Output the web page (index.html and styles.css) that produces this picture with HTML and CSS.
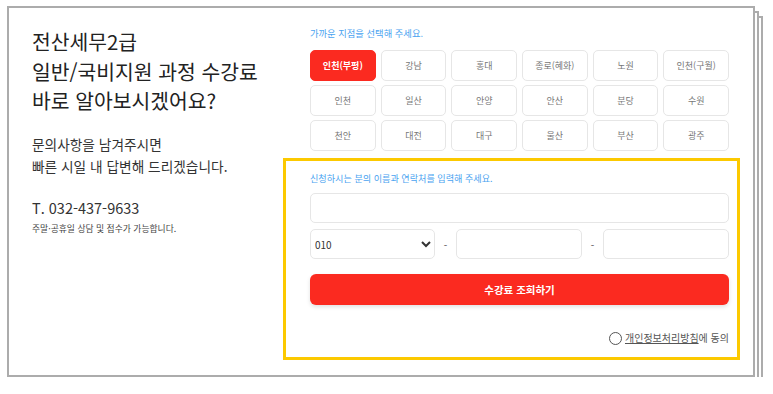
FILE: index.html
```html
<!DOCTYPE html>
<html lang="ko">
<head>
<meta charset="UTF-8">
<meta name="viewport" content="width=device-width, initial-scale=1.0">
<title>수강료 조회</title>
<link rel="stylesheet" href="styles.css">
</head>
<body>
<div class="card">
    <div class="info">
        <h1>전산세무2급<br>일반/국비지원 과정 수강료<br>바로 알아보시겠어요?</h1>
        <p class="desc">문의사항을 남겨주시면<br>빠른 시일 내 답변해 드리겠습니다.</p>
        <p class="tel">T. 032-437-9633</p>
        <p class="note">주말·공휴일 상담 및 접수가 가능합니다.</p>
    </div>
    <div class="apply">
        <div class="branch">
            <p class="guide">가까운 지점을 선택해 주세요.</p>
            <div class="branch-grid">
                <button class="branch-btn active">인천(부평)</button>
                <button class="branch-btn">강남</button>
                <button class="branch-btn">홍대</button>
                <button class="branch-btn">종로(혜화)</button>
                <button class="branch-btn">노원</button>
                <button class="branch-btn">인천(구월)</button>
                <button class="branch-btn">인천</button>
                <button class="branch-btn">일산</button>
                <button class="branch-btn">안양</button>
                <button class="branch-btn">안산</button>
                <button class="branch-btn">분당</button>
                <button class="branch-btn">수원</button>
                <button class="branch-btn">천안</button>
                <button class="branch-btn">대전</button>
                <button class="branch-btn">대구</button>
                <button class="branch-btn">울산</button>
                <button class="branch-btn">부산</button>
                <button class="branch-btn">광주</button>
            </div>
        </div>
        <form class="apply-form">
            <p class="guide">신청하시는 분의 이름과 연락처를 입력해 주세요.</p>
            <input type="text" class="field name-field">
            <div class="phone-row">
                <select class="field phone-select">
                    <option>010</option>
                    <option>011</option>
                    <option>016</option>
                    <option>017</option>
                </select>
                <span class="dash">-</span>
                <input type="text" class="field">
                <span class="dash">-</span>
                <input type="text" class="field">
            </div>
            <button type="submit" class="submit-btn">수강료 조회하기</button>
            <label class="agree">
                <span class="radio"></span>
                <a href="#" class="policy">개인정보처리방침</a>에 동의
            </label>
        </form>
    </div>
</div>
</body>
</html>
```

FILE: styles.css
```css
body {
    margin: 0;
    padding: 6px 0 0 7px;
    font-family: "Noto Sans CJK KR", "Noto Sans", sans-serif;
    background-color: #fff;
    color: #333;
}
.card {
    width: 744px;
    height: 367px;
    border: 2px solid #acacac;
    background-color: #fff;
    display: flex;
    box-shadow: 4px 5px 0 -2px #fff, 4px 5px 0 0 #acacac,
                8px 10px 0 -2px #fff, 8px 10px 0 0 #acacac;
}
.info {
    width: 251px;
    padding: 19px 0 0 23px;
}
h1 {
    margin: 0;
    font-size: 20.4px;
    font-weight: 400;
    line-height: 29.5px;
    color: #222;
}
.desc {
    margin: 17px 0 0;
    font-size: 13.7px;
    line-height: 22px;
    color: #333;
}
.tel {
    margin: 21px 0 0;
    font-size: 14.5px;
    line-height: 20px;
    color: #333;
}
.note {
    margin: 4px 0 0;
    font-size: 8.8px;
    line-height: 14px;
    color: #444;
}
.apply {
    width: 457px;
    padding-top: 18px;
}
.branch {
    padding: 0 11px 0 27px;
}
.guide {
    margin: 0;
    font-size: 9.3px;
    line-height: 14px;
    color: #4aa3f0;
}
.branch-grid {
    margin-top: 10px;
    display: grid;
    grid-template-columns: repeat(6, 1fr);
    grid-auto-rows: 31px;
    gap: 4px 5px;
}
.branch-btn {
    font-family: inherit;
    font-size: 9px;
    color: #777;
    background-color: #fff;
    border: 1px solid #e6e6e6;
    border-radius: 5px;
    padding: 0;
    cursor: pointer;
}
.branch-btn.active {
    background-color: #fb2a20;
    border-color: #fb2a20;
    color: #fff;
    font-weight: 700;
}
.apply-form {
    margin-top: 7px;
    height: 186px;
    border: 3px solid #fcc900;
    padding: 10px 8px 0 24px;
}
.apply-form .guide {
    font-size: 9.1px;
}
.field {
    display: block;
    height: 30px;
    box-sizing: border-box;
    border: 1px solid #e6e6e6;
    border-radius: 5px;
    background-color: #fff;
    font-family: inherit;
    font-size: 10px;
    color: #333;
}
.name-field {
    width: 100%;
    margin-top: 8px;
}
.phone-row {
    margin-top: 6px;
    display: flex;
    align-items: center;
}
.phone-row .field {
    width: 126px;
}
.phone-row .phone-select {
    width: 125px;
    padding-left: 0;
}
.dash {
    width: 21px;
    text-align: center;
    font-size: 10px;
    color: #555;
}
.submit-btn {
    display: block;
    width: 100%;
    height: 31px;
    margin-top: 15px;
    border: none;
    border-radius: 6px;
    background-color: #fb2a20;
    color: #fff;
    font-family: inherit;
    font-size: 10.5px;
    font-weight: 700;
    box-shadow: 0 2px 4px rgba(0, 0, 0, 0.12);
    cursor: pointer;
}
.agree {
    margin-top: 26px;
    display: flex;
    justify-content: flex-end;
    align-items: center;
    font-size: 10px;
    line-height: 14px;
    color: #555;
}
.radio {
    width: 11px;
    height: 11px;
    border: 1px solid #555;
    border-radius: 50%;
    margin-right: 3px;
}
.policy {
    color: #555;
    text-decoration: underline;
}
```
